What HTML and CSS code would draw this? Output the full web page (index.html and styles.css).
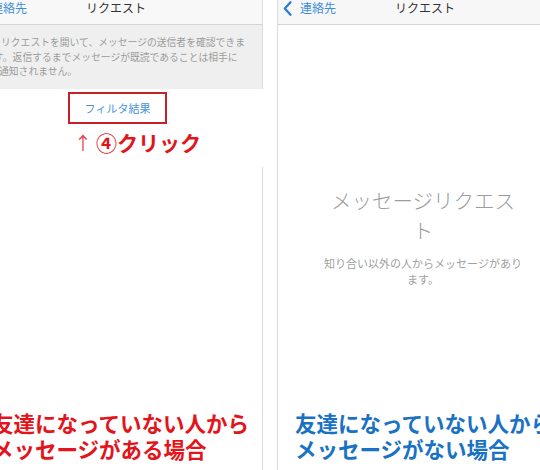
FILE: index.html
```html
<!DOCTYPE html>
<html lang="ja">
<head>
<meta charset="utf-8">
<link rel="stylesheet" href="styles.css">
</head>
<body>
<div class="stage">
  <section class="left">
    <div class="left-top">
      <div class="nav nav-left">
        <span class="back back-cut">連絡先</span>
        <span class="nav-title">リクエスト</span>
      </div>
      <div class="info">
        <span class="ln l1">リクエストを開いて、メッセージの送信者を確認できま</span>
        <span class="ln l2">す。返信するまでメッセージが既読であることは相手に</span>
        <span class="ln l3">通知されません。</span>
      </div>
    </div>
    <div class="mid">
      <div class="filter">フィルタ結果</div>
      <div class="click"><span class="arrow">↑</span><span class="num">④</span><span class="clk">クリック</span></div>
    </div>
    <div class="left-bottom">
      <p class="caption red">友達になっていない人から<br>メッセージがある場合</p>
    </div>
  </section>
  <div class="gap"></div>
  <section class="right">
    <div class="nav nav-right">
      <span class="back"><svg class="chev" width="9" height="15" viewBox="0 0 9 15"><polyline points="7.5,1.2 1.8,7.5 7.5,13.8" fill="none" stroke="#2a7ad6" stroke-width="2.2" stroke-linecap="round" stroke-linejoin="round"/></svg>連絡先</span>
      <span class="nav-title">リクエスト</span>
    </div>
    <div class="empty">
      <h1 class="empty-title">メッセージリクエスト</h1>
      <p class="empty-sub">知り合い以外の人からメッセージがあります。</p>
    </div>
    <p class="caption blue">友達になっていない人から<br>メッセージがない場合</p>
  </section>
</div>
</body>
</html>
```

FILE: styles.css
```css
* { box-sizing: border-box; }
html, body {
  margin: 0;
  padding: 0;
  background: #fff;
}
body {
  width: 540px;
  height: 470px;
  overflow: hidden;
  font-family: "Noto Sans CJK JP", "Noto Sans", sans-serif;
}
.stage {
  display: flex;
  height: 470px;
}
.left {
  width: 263px;
  flex: none;
  display: flex;
  flex-direction: column;
  overflow: hidden;
}
.left-top {
  border-right: 1px solid #dcdcdc;
}
.nav {
  height: 25px;
  background: #f8f8f8;
  border-bottom: 1px solid #d4d4d4;
  display: flex;
  align-items: flex-start;
  font-size: 12px;
  line-height: 16px;
  white-space: nowrap;
}
.nav-left {
  gap: 59px;
}
.back {
  color: #3d8edb;
  display: flex;
  align-items: center;
}
.back-cut {
  margin-left: -9px;
}
.nav-title {
  color: #333;
}
.info {
  height: 64px;
  background: #efefef;
  padding-top: 10px;
  overflow: hidden;
  display: flex;
  flex-direction: column;
  font-size: 9.8px;
  line-height: 14.5px;
  color: #9c9c9c;
  white-space: nowrap;
}
.l1 { margin-left: 1px; }
.l2 { margin-left: -6px; }
.l3 { margin-left: -1px; }
.mid {
  height: 78px;
  padding-top: 3px;
}
.filter {
  margin-left: 68px;
  width: 99px;
  height: 32px;
  border: 2px solid #c8202a;
  display: flex;
  align-items: center;
  justify-content: center;
  color: #4a93dc;
  font-size: 11px;
}
.click {
  margin-top: 6px;
  margin-left: 74px;
  height: 24px;
  display: flex;
  align-items: center;
  color: #e0161c;
  font-weight: 700;
  white-space: nowrap;
}
.arrow {
  font-weight: 400;
  font-size: 18px;
  color: #e4454a;
  margin-right: 4px;
}
.num {
  font-size: 21px;
}
.clk {
  font-size: 21px;
}
.left-bottom {
  flex: 1;
  border-right: 1px solid #dcdcdc;
  display: flex;
  align-items: flex-end;
  padding-bottom: 8px;
}
.caption {
  margin: 0;
  font-size: 21.5px;
  line-height: 26px;
  font-weight: 700;
  white-space: nowrap;
}
.red {
  color: #e3141b;
  margin-left: -8px;
}
.blue {
  color: #1a72c4;
  margin-top: auto;
  margin-bottom: 8px;
  margin-left: 17px;
}
.gap {
  width: 14px;
  flex: none;
}
.right {
  flex: 1;
  border-left: 1px solid #dcdcdc;
  display: flex;
  flex-direction: column;
  overflow: hidden;
}
.nav-right {
  height: 25px;
  padding-left: 5px;
  gap: 59px;
  background: #f7f7f7;
}
.chev {
  margin-right: 8px;
  margin-top: 1px;
}
.empty {
  margin-left: 44px;
  width: 202px;
  padding-top: 160px;
  text-align: center;
}
.empty-title {
  margin: 0;
  font-size: 20.5px;
  line-height: 30px;
  font-weight: 300;
  color: #9c9c9c;
}
.empty-sub {
  margin: 10px 0 0;
  font-size: 11px;
  line-height: 16px;
  color: #a0a0a0;
}
```
